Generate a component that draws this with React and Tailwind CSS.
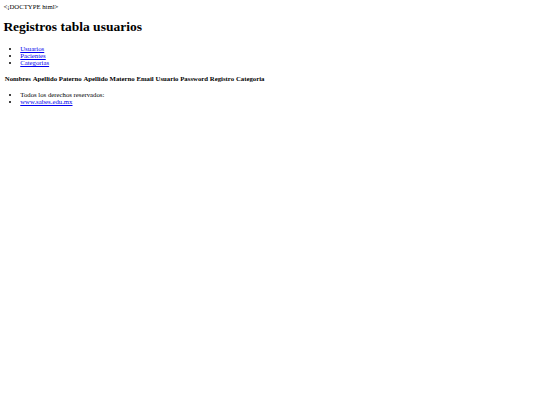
import React from "react";

const navLinks = ["Usuarios", "Pacientes", "Categorias"];
const columns = [
  "Nombres",
  "Apellido Paterno",
  "Apellido Materno",
  "Email",
  "Usuario",
  "Password",
  "Registro",
  "Categoria",
];

export default function App() {
  return (
    <div className="min-h-[405px] bg-white p-[3.375px] text-[6.75px] leading-[normal] text-black font-['Liberation_Serif',serif]">
      <div>&lt;¡DOCTYPE html&gt;</div>
      <h1 className="mt-[9.04px] mb-[10px] text-[13.5px] leading-[normal] font-bold">Registros tabla usuarios</h1>

      <ul className="my-[6.75px] list-disc pl-[16.875px]">
        {navLinks.map((item) => (
          <li key={item}>
            <a href="#" className="text-[#0000ee] underline">
              {item}
            </a>
          </li>
        ))}
      </ul>

      <table className="mt-[3px] border-separate border-spacing-[1.5px]">
        <thead>
          <tr>
            {columns.map((col) => (
              <th key={col} className="p-[0.42px] text-center font-bold">
                {col}
              </th>
            ))}
          </tr>
        </thead>
        <tbody></tbody>
      </table>

      <ul className="mt-[8px] mb-[6.75px] list-disc pl-[16.875px]">
        <li>Todos los derechos reservados:</li>
        <li className="mt-[0.5px]">
          <a href="#" className="text-[#0000ee] underline">
            www.sabes.edu.mx
          </a>
        </li>
      </ul>
    </div>
  );
}
